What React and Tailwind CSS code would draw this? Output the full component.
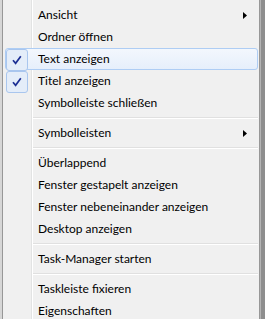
const font = { fontFamily: 'Lato, "Noto Sans", sans-serif' }

const rows = [
  { label: "Ansicht", sub: true },
  { label: "Ordner öffnen" },
  { label: "Text anzeigen", checked: true, hover: true },
  { label: "Titel anzeigen", checked: true },
  { label: "Symbolleiste schließen" },
  "sep",
  { label: "Symbolleisten", sub: true },
  "sep",
  { label: "Überlappend" },
  { label: "Fenster gestapelt anzeigen" },
  { label: "Fenster nebeneinander anzeigen" },
  { label: "Desktop anzeigen" },
  "sep",
  { label: "Task-Manager starten" },
  "sep",
  { label: "Taskleiste fixieren" },
  { label: "Eigenschaften" },
]

function Check() {
  return (
    <div className="absolute left-0 top-0 w-[22px] h-[22px] rounded-[3px] border border-[#a9c6ee] bg-[#e4edf9] flex items-center justify-center">
      <svg width="10" height="10" viewBox="0 0 10 10">
        <path d="M1 5.2 L3.6 8.3 L8.8 1.2" fill="none" stroke="#1c2f94" strokeWidth="1.7" />
      </svg>
    </div>
  )
}

function Item({ label, sub, checked, hover }) {
  return (
    <div
      className={
        "relative h-[22px] flex items-center pl-[32px] pr-[10px] rounded-[3px] border " +
        (hover
          ? "border-[#aecdf4] bg-[linear-gradient(to_bottom,#f3f7fd,#e6effb)]"
          : "border-transparent")
      }
    >
      {checked && <Check />}
      <span className="flex-1 text-[12px] text-black leading-none whitespace-nowrap">{label}</span>
      {sub && (
        <svg width="4" height="7" viewBox="0 0 4 7">
          <path d="M0 0 L4 3.5 L0 7 Z" fill="#000" />
        </svg>
      )}
    </div>
  )
}

export default function App() {
  return (
    <div className="w-[265px] h-[319px] overflow-hidden flex bg-[#8e8e8e]" style={font}>
      <div className="w-[2px] bg-[#d6d6d6]" />
      <div className="w-[258px] h-[330px] border-l border-r border-[#979797] pt-[4px] pl-[2px] pr-[1px] bg-[linear-gradient(to_right,#f0f0f0_28px,#e2e3e3_28px,#e2e3e3_29px,#ffffff_29px,#ffffff_30px,#f0f0f0_30px)]">
        {rows.map((r, i) =>
          r === "sep" ? (
            <div key={i} className="h-[8px] pl-[28px] flex flex-col justify-center">
              <div className="h-[1px] bg-[#e0e0e0]" />
              <div className="h-[1px] bg-white" />
            </div>
          ) : (
            <Item key={i} {...r} />
          )
        )}
      </div>
      <div className="w-[1px] bg-[#b4b4b4]" />
    </div>
  )
}
